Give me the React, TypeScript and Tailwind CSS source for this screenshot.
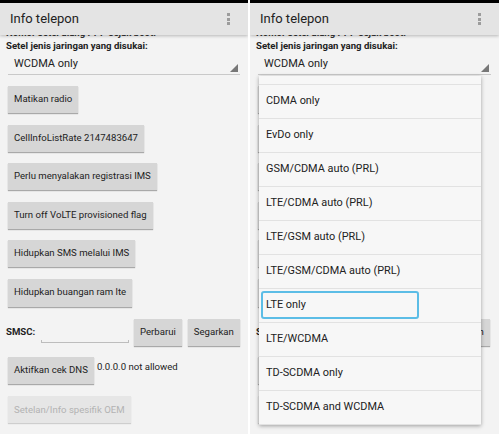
import React from 'react';

const options = [
  'CDMA only',
  'EvDo only',
  'GSM/CDMA auto (PRL)',
  'LTE/CDMA auto (PRL)',
  'LTE/GSM auto (PRL)',
  'LTE/GSM/CDMA auto (PRL)',
  'LTE only',
  'LTE/WCDMA',
  'TD-SCDMA only',
  'TD-SCDMA and WCDMA',
];

const btn =
  'h-[27px] px-[6px] bg-[#d6d6d6] shadow-[0_1px_1px_rgba(0,0,0,0.3)] text-[9.6px] text-[#222] whitespace-nowrap';

function Button({ label, className = '' }: { label: string; className?: string }) {
  return <button className={`${btn} ${className}`}>{label}</button>;
}

function Panel({ popup, width }: { popup?: boolean; width: string }) {
  return (
    <div className={`relative h-full ${width} bg-[#f3f3f3] overflow-hidden`}>
      <div className="h-[3px] bg-black" />
      {/* Action bar */}
      <div className="relative z-10 h-[32px] bg-[#e4e4e4] shadow-[0_1px_3px_rgba(0,0,0,0.25)] flex items-center justify-between pl-[10px] pr-[18px]">
        <span className="text-[13px] text-[#222]">Info telepon</span>
        <div className="flex flex-col gap-[1.5px]">
          <span className="w-[3px] h-[3px] bg-[#9c9c9c]" />
          <span className="w-[3px] h-[3px] bg-[#9c9c9c]" />
          <span className="w-[3px] h-[3px] bg-[#9c9c9c]" />
        </div>
      </div>

      <div className="flex flex-col px-[6px]">
        {/* scrolled text, cut by the bar */}
        <div className="h-[4px] overflow-hidden">
          <p className="-mt-[8px] text-[9.6px] font-bold leading-[12px] text-[#333] whitespace-nowrap">
            Nomor setel ulang PPP sejak boot:
          </p>
        </div>
        <p className="mt-[1px] text-[9.6px] font-bold leading-[12px] text-[#222]">
          Setel jenis jaringan yang disukai:
        </p>

        {/* Spinner */}
        <div className="relative mt-[2px] mx-[2px] h-[21px] border-b border-[#c9c9c9] flex items-center pl-[6px]">
          <span className="text-[11px] text-[#222]">WCDMA only</span>
          <span className="absolute right-[2px] bottom-[2px] w-0 h-0 border-l-[8px] border-l-transparent border-b-[8px] border-b-[#777]" />
        </div>

        <div className="flex flex-col items-start gap-[11.5px] mt-[11px] ml-[2px]">
          <Button label="Matikan radio" />
          <Button label="CellInfoListRate 2147483647" />
          <Button label="Perlu menyalakan registrasi IMS" />
          <Button label="Turn off VoLTE provisioned flag" />
          <Button label="Hidupkan SMS melalui IMS" />
          <Button label="Hidupkan buangan ram lte" className="h-[28px]" />
        </div>

        {/* SMSC */}
        <div className="flex items-center mt-[12px] h-[27px]">
          <span className="w-[35px] text-[9.6px] font-bold text-[#222]">SMSC:</span>
          <div className="self-end mb-[3px] w-[88px] h-[3px] border-b border-x border-[#bdbdbd]" />
          <Button label="Perbarui" className="ml-[5px]" />
          <Button label="Segarkan" className="ml-[6px]" />
        </div>

        {/* DNS */}
        <div className="flex items-start mt-[11px] ml-[2px]">
          <Button label="Aktifkan cek DNS" />
          <span className="ml-[3px] mt-[3px] text-[9.6px] text-[#222]">0.0.0.0 not allowed</span>
        </div>

        <div className="mt-[12px] ml-[2px]">
          <button className="h-[27px] px-[6px] bg-[#e6e6e6] shadow-[0_1px_1px_rgba(0,0,0,0.15)] text-[9.6px] text-[#b3b3b3] whitespace-nowrap">
            Setelan/Info spesifik OEM
          </button>
        </div>
      </div>

      {popup && (
        <div className="absolute z-20 left-[9px] top-[76px] w-[222px] bg-[#f7f7f7] shadow-[0_1px_4px_rgba(0,0,0,0.35)]">
          <div className="h-[9px] border-b border-[#e2e2e2]" />
          {options.map((o, i) => (
            <div key={o} className="relative h-[34px] border-b border-[#e2e2e2] flex items-center pl-[7px]">
              {i === 6 && (
                <div className="absolute left-[2px] top-[2px] w-[158px] h-[28px] border-2 border-[#5cbde6] rounded-[3px]" />
              )}
              <span className="relative text-[10.9px] text-[#222]">{o}</span>
            </div>
          ))}
        </div>
      )}
    </div>
  );
}

export default function App() {
  return (
    <div className="flex w-[499px] h-[434px] bg-white font-['Roboto',sans-serif] overflow-hidden">
      <Panel width="w-[248px]" />
      <div className="w-[2px]" />
      <Panel width="w-[249px]" popup />
    </div>
  );
}
